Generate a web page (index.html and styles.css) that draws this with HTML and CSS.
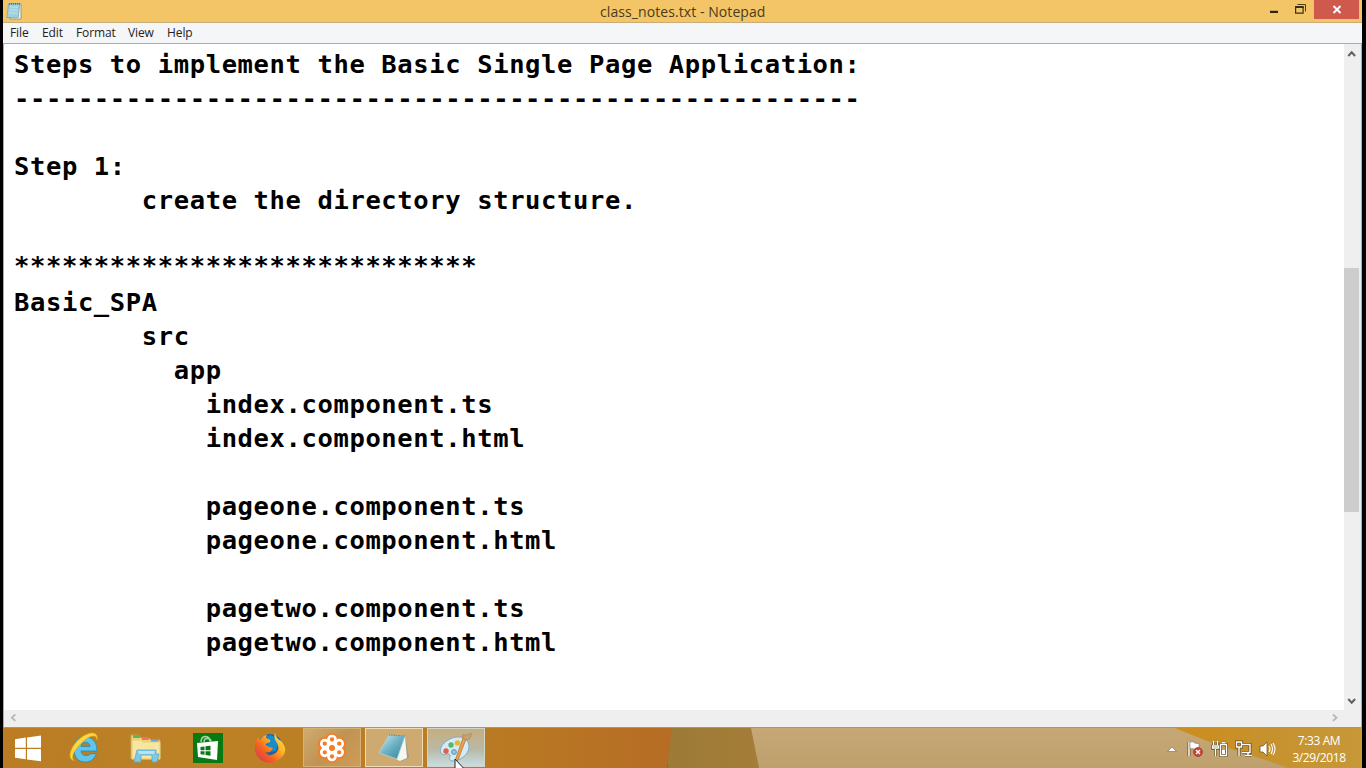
FILE: index.html
```html
<!DOCTYPE html>
<html lang="en">
<head>
<meta charset="utf-8">
<title>class_notes.txt - Notepad</title>
<link rel="stylesheet" href="styles.css">
</head>
<body>
<div class="screen">
  <div class="window">
    <header class="titlebar">
      <svg class="app-icon" width="18" height="19" viewBox="0 0 18 19"><path d="M4 2h12v15H5z" fill="#f4f4e6" stroke="#8c8a72" stroke-width=".8"/><path d="M3.500 2h11.200l-1.400 13.600H1.800z" fill="#9fd0dc" stroke="#6ba1b1" stroke-width=".7"/><path d="M5 5h8M4.700 8h8M4.400 11h8" stroke="#bde3ea"/><path d="M4 1.800h12" stroke="#596b70" stroke-width="1.500" stroke-dasharray="1 1"/></svg>
      <span class="title">class_notes.txt - Notepad</span>
      <div class="controls">
        <svg width="34" height="19" viewBox="0 0 34 19"><path d="M12 11.900h8" stroke="#2d2412" stroke-width="2.200"/></svg>
        <svg class="restore" width="18" height="19" viewBox="0 0 18 19"><path d="M5.500 4.500h8v7" fill="none" stroke="#4c3f20" stroke-width="1"/><path d="M3.600 7h7.500v6.200H3.600z" fill="none" stroke="#3c3118" stroke-width="1.200"/><path d="M3 7h8.700" stroke="#3c3118" stroke-width="2"/></svg>
        <span class="close"><svg width="45" height="19" viewBox="0 0 45 19"><path d="M19.500 6l7 7m0-7l-7 7" stroke="#fff" stroke-width="1.900"/></svg></span>
      </div>
    </header>
    <nav class="menu"><span class="m-file">File</span><span class="m-edit">Edit</span><span class="m-format">Format</span><span class="m-view">View</span><span class="m-help">Help</span></nav>
    <main class="editor">
      <div class="body">
<pre class="text">Steps to implement the Basic Single Page Application:
-----------------------------------------------------

Step 1:
        create the directory structure.

<span class="stars">*****************************</span>
Basic_SPA
        src
          app
            index.component.ts
            index.component.html

            pageone.component.ts
            pageone.component.html

            pagetwo.component.ts
            pagetwo.component.html</pre>
        <div class="vscroll">
          <svg width="16" height="18" viewBox="0 0 16 18"><path d="M4.300 12l3.400-3.700 3.400 3.700" fill="none" stroke="#606060" stroke-width="2"/></svg>
          <div class="thumb"></div>
          <svg width="16" height="18" viewBox="0 0 16 18"><path d="M4.300 7l3.400 3.700L11.100 7" fill="none" stroke="#606060" stroke-width="2"/></svg>
        </div>
      </div>
      <div class="hscroll">
        <svg width="18" height="16" viewBox="0 0 18 16"><path d="M11.300 4.500L7.800 7.700l3.500 3.200" fill="none" stroke="#b5b5b5" stroke-width="1.700"/></svg>
        <svg class="h-right" width="18" height="16" viewBox="0 0 18 16"><path d="M7 4.500l3.500 3.200L7 10.900" fill="none" stroke="#b5b5b5" stroke-width="1.700"/></svg>
      </div>
    </main>
  </div>
  <footer class="taskbar">
    <svg class="wallpaper" width="1359" height="40" viewBox="0 0 1359 40" preserveAspectRatio="none">
      <defs>
        <linearGradient id="wood"><stop offset="0" stop-color="#b77b25"/><stop offset=".25" stop-color="#bd8126"/><stop offset=".7" stop-color="#b97c22"/><stop offset="1" stop-color="#b66c25"/></linearGradient>
        <linearGradient id="olive"><stop offset="0" stop-color="#9c7b37"/><stop offset="1" stop-color="#a47d38"/></linearGradient>
        <linearGradient id="sand" x2="0" y2="1"><stop offset="0" stop-color="#c5a875"/><stop offset="1" stop-color="#bda06c"/></linearGradient>
        <linearGradient id="gold"><stop offset="0" stop-color="#cc8d1b"/><stop offset=".5" stop-color="#c6922e"/><stop offset="1" stop-color="#c79838"/></linearGradient>
      </defs>
      <path d="M0 0h672l-8 40H0z" fill="url(#wood)"/><path d="M67 0L51 40H0V0z" fill="#c07f23" opacity=".4"/>
      <path d="M669 0h80l8 40h-93z" fill="url(#olive)"/><path d="M748 0h611v40H756z" fill="url(#sand)"/>
      <path d="M1172 0h187v40h-74q-36-13-70-23-24-9-43-17z" fill="url(#gold)"/>
    </svg>
    <div class="apps">
      <div class="app start"><svg width="28" height="27" viewBox="0 0 28 27"><path d="M1 4.200l10.800-1.600v10.200H1zM13 2.400L27 .5v12.300H13zM1 14h10.800v10.200L1 22.700zM13 14h14v12.300l-14-1.900z" fill="#fff"/></svg></div>
      <div class="app"><svg width="34" height="34" viewBox="0 0 34 34"><path d="M7 18C7 10 11.500 6 18.500 6S30 11 30 20H14q.8 4.500 5 4.500 3.500 0 5-1.800h5.300C27 28.500 23.500 31 18.500 31 11 31 7 26 7 18zm7-2.500h9q-.5-4.300-4.500-4.300T14 15.500z" fill="#60c5ed" stroke="#258cb9" stroke-width=".8"/><path d="M7 29.500C-1 28 4 15 13 7.500 22 0 32 0 30 9c0-6-7-5-14 1.500C8 18 3 26 7 29.500z" fill="#ffd83c" stroke="#e5a91e" stroke-width=".7"/></svg></div>
      <div class="app"><svg width="34" height="34" viewBox="0 0 34 34"><path d="M2 4h8l2 3h8l2 2h9v19H2z" fill="#f0d576" stroke="#c2a651"/><path d="M4 4h7v3H4z" fill="#58b66b"/><path d="M13 6h7v3h-7z" fill="#e77863"/><path d="M22 9h7v3h-7z" fill="#62a5df"/><path d="M3 9h9l2 2h17v17H3z" fill="#f6e6a0" stroke="#e5cc7b"/><path d="M8 19h19v4h3l-2 8h-5v-7H12v7H5l2-8z" fill="#80c8e4" stroke="#5aa9cc" stroke-width=".8"/><path d="M9 20h17l-1 3H10z" fill="#b5e3f1"/></svg></div>
      <div class="app"><svg width="30" height="30" viewBox="0 0 30 30"><path d="M0 0h30v30H0z" fill="#087a13"/><path d="M8 9q0-5 4-5.500 5 0 5 5M11 9q0-4 4-3.500 3 .5 3 3" fill="none" stroke="#a9d5a5" stroke-width="1.500"/><path d="M4 10l21-2-1 19-19-3z" fill="#fff"/><path d="M7.500 14l4-.5v3.800h-4zM12.500 13.300l5-.6v4.600h-5zM7.500 18.300h4v3.500l-4-.5zM12.500 18.300h5v4.400l-5-.7z" fill="#087a13"/></svg></div>
      <div class="app"><svg width="34" height="34" viewBox="0 0 34 34"><defs><linearGradient id="fox" x1="1" x2="0" y2="1"><stop stop-color="#ffeb55"/><stop offset=".35" stop-color="#ffb428"/><stop offset=".65" stop-color="#f1611e"/><stop offset="1" stop-color="#d92a64"/></linearGradient></defs><circle cx="17" cy="15" r="12" fill="#2462a6"/><path d="M14 5q8-3 11 8l-2 7-8 1z" fill="#178dca"/><path d="M22 2q1 5 6 8 8 9 1 16-6 6-12 6Q5 31 2 20 1 12 5 6l2 3q3-5 7-5-2 3 1 4 3 0 2 3-5 2-4 3 3 3 7 3-3 6-8 4 3 5 9 2 7-4 3-11-4-5-2-10z" fill="url(#fox)"/></svg></div>
      <div class="app running"><svg width="30" height="30" viewBox="0 0 30 30"><g fill="#f47d25" stroke="#f47d25" stroke-width="3"><circle cx="15" cy="6.500" r="5"/><circle cx="22.500" cy="10.700" r="5"/><circle cx="22.500" cy="19.300" r="5"/><circle cx="15" cy="23.500" r="5"/><circle cx="7.500" cy="19.300" r="5"/><circle cx="7.500" cy="10.700" r="5"/></g><g fill="#f47d25" stroke="#fff" stroke-width="2.700"><circle cx="15" cy="6.500" r="3.500"/><circle cx="22.200" cy="10.700" r="3.500"/><circle cx="22.200" cy="19.300" r="3.500"/><circle cx="15" cy="23.500" r="3.500"/><circle cx="7.800" cy="19.300" r="3.500"/><circle cx="7.800" cy="10.700" r="3.500"/></g><circle cx="15" cy="15" r="4.300" fill="#f47d25" stroke="#fff" stroke-width="2.600"/></svg></div>
      <div class="app running notepad"><svg width="34" height="30" viewBox="0 0 34 30"><defs><linearGradient id="page" x2="1" y2="1"><stop stop-color="#d2edf0"/><stop offset=".5" stop-color="#6bafc2"/><stop offset="1" stop-color="#32829c"/></linearGradient></defs><path d="M28 3l4 22-7 3-5-2z" fill="#999d91"/><path d="M28 3l2 22-7 3-4-2z" fill="#f5f7ef"/><path d="M12 2l16 1-8 23L2 20z" fill="url(#page)" stroke="#a8d5de" stroke-width=".8"/><path d="M12 2l16 1" stroke="#657c80" stroke-width="1.200" stroke-dasharray="1 .7"/></svg></div>
      <div class="app running paint"><svg width="34" height="32" viewBox="0 0 34 32"><path d="M18 5c10-1 14 7 11 14-3 8-15 12-18 9-2-2 2-4-1-6-3-1-6 2-8-1C-1 15 8 6 18 5z" fill="#d5eaf4" stroke="#80abc4"/><circle cx="7" cy="19" r="2.700" fill="#de6048"/><circle cx="12" cy="13" r="2.700" fill="#58b869"/><circle cx="18.500" cy="11" r="2.800" fill="#edb62c"/><circle cx="15" cy="20" r="2.400" fill="#99c7df" stroke="#578faa"/><path d="M27 7L19 28l-2 2 0-4 7-20z" fill="#e7a34c" stroke="#b87632" stroke-width=".8"/><path d="M24 6q-1-5 2-3 2 1 6-2 1 6-5 7z" fill="#cba16b" stroke="#a6814e" stroke-width=".6"/></svg></div>
    </div>
    <div class="tray">
      <svg width="110" height="24" viewBox="0 0 110 24">
        <path d="M.5 14.500l4.500-4.500 4.500 4.500z" fill="#fff" stroke="#8a7654" stroke-width=".7"/>
        <path d="M22 5v14" stroke="#655331" stroke-width="3"/><path d="M22 5v14" stroke="#fff" stroke-width="1.500"/><path d="M23 5q3-1 5 1 2 1 4 0v7q-3 1-5-1-2-1-4 0z" fill="#fff" stroke="#8a7654" stroke-width=".6"/><circle cx="31" cy="15" r="4.500" fill="#c84239" stroke="#8d3328" stroke-width=".6"/><path d="M29 13l4 4m0-4l-4 4" stroke="#fff" stroke-width="1.400"/>
        <g fill="none" stroke="#644d22" stroke-width="2.600"><path d="M46.500 5v3m4-3v3m-5 1h6v2.500h-6zm3 3v7M53.500 7.500h6v11h-6zM55 5.500h3"/></g><g fill="none" stroke="#fff" stroke-width="1.300"><path d="M46.500 4v4m4-4v4m-5 1h6v2h-6zm3 3v7M53.500 7.500h6v11h-6zM55 5.500h3"/></g><path d="M55 13h3v4h-3z" fill="#fff"/>
        <g fill="none" stroke="#644d22" stroke-width="3"><path d="M75 7.500h8v8h-8m3 3h7M69.500 5h5v5h-5zm2.500 5v9"/></g><g fill="none" stroke="#fff" stroke-width="1.400"><path d="M75 7.500h8v8h-8m3 3h7m-4-3v3M69.500 5h5v5h-5zm2.500 5v9"/></g>
        <path d="M93 9h3l4-4v14l-4-4h-3z" fill="#fff" stroke="#745926" stroke-width=".8"/><path d="M102 9q2 3 0 6m2-8q3 5 0 10m2-11q4 6 0 12" fill="none" stroke="#fff" stroke-width="1.100"/>
      </svg>
      <div class="clock"><span>7:33 AM</span><span>3/29/2018</span></div>
    </div>
  </footer>
  <svg class="cursor" width="16" height="22" viewBox="0 0 16 22"><path d="M1 1v17l4-4 3 7 3-1-3-6h5z" fill="#fff" stroke="#222" stroke-width="1"/></svg>
</div>
</body>
</html>
```

FILE: styles.css
```css
* { box-sizing: border-box; }
body { margin: 0; background: #000; }
svg { display: block; flex: none; }
.screen { position: relative; width: 1366px; height: 768px; padding: 0 4px 0 3px; overflow: hidden; background: #000; display: flex; flex-direction: column; }
.window { height: 728px; display: flex; flex-direction: column; }
.titlebar { height: 23px; display: flex; justify-content: space-between; background: #f3c566; border-bottom: 1px solid #c9ad76; position: relative; font: 14px/22px "Open Sans", sans-serif; color: #4b3b1c; }
.app-icon { margin: 2px 0 0 2px; }
.title { position: absolute; left: 597px; top: 1px; white-space: nowrap; letter-spacing: .08px; }
.controls { display: flex; padding-right: 3px; }
.restore { margin-right: 4px; }
.close { background: #cf594c; height: 19px; width: 45px; }
.menu { height: 20px; background: #f5f6f8; font: 12px/20px "Open Sans", sans-serif; color: #222; display: flex; padding-left: 7px; white-space: nowrap; letter-spacing: -.1px; }
.m-file { width: 32px; }
.m-edit { width: 34px; }
.m-format { width: 52px; }
.m-view { width: 39px; }
.editor { flex: 1; min-height: 0; border: 1px solid #83b4e3; border-bottom-color: #71a4c4; background: #fff; display: flex; flex-direction: column; }
.body { height: 666px; display: flex; justify-content: space-between; }
.text { margin: 0; padding: 3px 0 0 10px; font: bold 25.5px/34px "DejaVu Sans Mono", monospace; letter-spacing: .62px; color: #000; }
.stars { position: relative; top: -3px; }
.vscroll { width: 17px; border-right: 1px solid #e1eff7; background: #efefef; display: flex; flex-direction: column; }
.thumb { height: 244px; width: 15px; background: #cdcdcd; margin: 206px 0 180px; }
.hscroll { flex: 1; background: #efefef; display: flex; justify-content: space-between; }
.h-right { margin-right: 17px; }
.taskbar { height: 40px; position: relative; display: flex; justify-content: space-between; overflow: hidden; }
.wallpaper { position: absolute; inset: 0; }
.apps { position: relative; display: flex; gap: 4px; }
.app { width: 58px; height: 40px; display: flex; align-items: center; justify-content: center; }
.start { width: 48px; padding-left: 1px; }
.running { height: 39px; border: 1px solid #d5b178; background: linear-gradient(135deg, #cfaa70, #c19353 50%, #ce9c57); }
.notepad { border-color: #f0ddb8; background: #ceaa71; }
.paint { border-color: #d3d4c8; background: linear-gradient(#c6ae81, #b9b9a5 55%, #c8dde4); }
.tray { position: relative; display: flex; align-items: flex-start; padding: 9px 5px 0 0; }
.clock { display: flex; flex-direction: column; align-items: center; width: 80px; padding-left: 4px; margin-top: -5px; font: 12px/17px "Open Sans", sans-serif; color: #fff; letter-spacing: -.4px; }
.cursor { position: absolute; left: 454px; top: 758px; }
```
